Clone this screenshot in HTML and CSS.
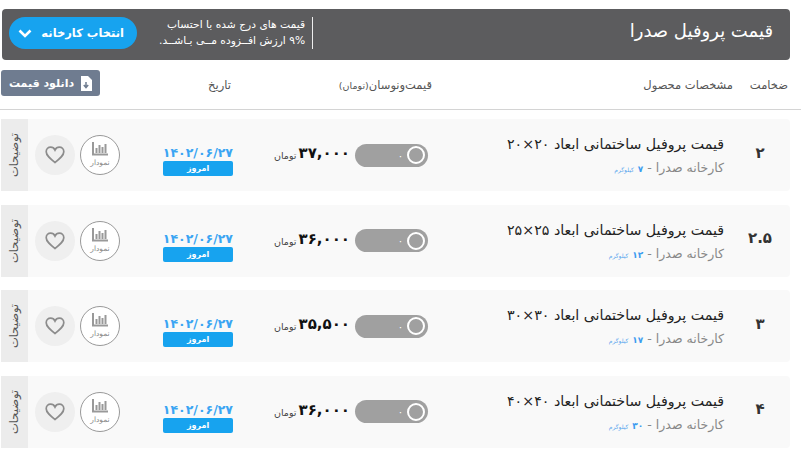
FILE: index.html
```html
<!DOCTYPE html>
<html lang="fa" dir="rtl">
<head><meta charset="utf-8"><title>قیمت پروفیل صدرا</title><link rel="stylesheet" href="styles.css"></head>
<body>
<div class="page">
<header class="banner">
  <h1 class="banner-title">قیمت پروفیل صدرا</h1>
  <div class="banner-side">
    <p class="banner-note">قیمت های درج شده با احتساب<br>۹% ارزش افــزوده مــی بـاشــد.</p>
    <button class="pick"><span>انتخاب کارخانه</span><svg width="14" height="9" viewBox="0 0 14 9"><path d="M1.5 1.5 7 7l5.5-5.5" fill="none" stroke="#fff" stroke-width="2.6"/></svg></button>
  </div>
</header>
<div class="thead">
  <span class="th-size">ضخامت</span>
  <span class="th-spec">مشخصات محصول</span>
  <span class="th-price">قیمت‌ونوسان<small>(تومان)</small></span>
  <span class="th-date">تاریخ</span>
  <button class="dl"><svg width="12" height="15" viewBox="0 0 12 15"><path d="M1 0h7l4 4v11H1z" fill="#fff"/><path d="M6 6v5M3.800 9 6 11.500 8.200 9" fill="none" stroke="#6f7c90" stroke-width="1.500"/></svg><span>دانلود قیمت</span></button>
</div>
<div class="row">
  <div class="size">۲</div>
  <div class="spec"><div class="name">قیمت پروفیل ساختمانی ابعاد ۲۰×۲۰</div><div class="maker">کارخانه صدرا - <b>۷</b> <small>کیلوگرم</small></div></div>
  <div class="toggle"><i></i><span>۰</span></div>
  <div class="price"><b>۳۷,۰۰۰</b><small>تومان</small></div>
  <div class="date"><span>۱۴۰۲/۰۶/۲۷</span><em>امروز</em></div>
  <div class="chart"><svg width="16" height="14" viewBox="0 0 16 14"><path d="M1 0v12.500h15M4.500 6v5M7.500 3v8M10.500 5v6M13.500 2v9" fill="none" stroke="#999" stroke-width="2"/></svg><small>نمودار</small></div>
  <div class="heart"><svg width="20" height="18" viewBox="0 0 20 18"><path d="M10 16.500C5 12.500 1.200 9.500 1.200 5.800 1.200 3 3.300 1.200 5.700 1.200c1.800 0 3.400 1 4.300 2.800.9-1.800 2.500-2.800 4.300-2.800 2.400 0 4.500 1.800 4.500 4.600 0 3.700-3.800 6.700-8.800 10.700z" fill="none" stroke="#8c8c8c" stroke-width="1.700"/></svg></div>
  <div class="notes"><span>توضیحات</span></div>
</div>
<div class="row">
  <div class="size">۲.۵</div>
  <div class="spec"><div class="name">قیمت پروفیل ساختمانی ابعاد ۲۵×۲۵</div><div class="maker">کارخانه صدرا - <b>۱۲</b> <small>کیلوگرم</small></div></div>
  <div class="toggle"><i></i><span>۰</span></div>
  <div class="price"><b>۳۶,۰۰۰</b><small>تومان</small></div>
  <div class="date"><span>۱۴۰۲/۰۶/۲۷</span><em>امروز</em></div>
  <div class="chart"><svg width="16" height="14" viewBox="0 0 16 14"><path d="M1 0v12.500h15M4.500 6v5M7.500 3v8M10.500 5v6M13.500 2v9" fill="none" stroke="#999" stroke-width="2"/></svg><small>نمودار</small></div>
  <div class="heart"><svg width="20" height="18" viewBox="0 0 20 18"><path d="M10 16.500C5 12.500 1.200 9.500 1.200 5.800 1.200 3 3.300 1.200 5.700 1.200c1.800 0 3.400 1 4.300 2.800.9-1.800 2.500-2.800 4.300-2.800 2.400 0 4.500 1.800 4.500 4.600 0 3.700-3.800 6.700-8.800 10.700z" fill="none" stroke="#8c8c8c" stroke-width="1.700"/></svg></div>
  <div class="notes"><span>توضیحات</span></div>
</div>
<div class="row">
  <div class="size">۳</div>
  <div class="spec"><div class="name">قیمت پروفیل ساختمانی ابعاد ۳۰×۳۰</div><div class="maker">کارخانه صدرا - <b>۱۷</b> <small>کیلوگرم</small></div></div>
  <div class="toggle"><i></i><span>۰</span></div>
  <div class="price"><b>۳۵,۵۰۰</b><small>تومان</small></div>
  <div class="date"><span>۱۴۰۲/۰۶/۲۷</span><em>امروز</em></div>
  <div class="chart"><svg width="16" height="14" viewBox="0 0 16 14"><path d="M1 0v12.500h15M4.500 6v5M7.500 3v8M10.500 5v6M13.500 2v9" fill="none" stroke="#999" stroke-width="2"/></svg><small>نمودار</small></div>
  <div class="heart"><svg width="20" height="18" viewBox="0 0 20 18"><path d="M10 16.500C5 12.500 1.200 9.500 1.200 5.800 1.200 3 3.300 1.200 5.700 1.200c1.800 0 3.400 1 4.300 2.800.9-1.800 2.500-2.800 4.300-2.800 2.400 0 4.500 1.800 4.500 4.600 0 3.700-3.800 6.700-8.800 10.700z" fill="none" stroke="#8c8c8c" stroke-width="1.700"/></svg></div>
  <div class="notes"><span>توضیحات</span></div>
</div>
<div class="row">
  <div class="size">۴</div>
  <div class="spec"><div class="name">قیمت پروفیل ساختمانی ابعاد ۴۰×۴۰</div><div class="maker">کارخانه صدرا - <b>۳۰</b> <small>کیلوگرم</small></div></div>
  <div class="toggle"><i></i><span>۰</span></div>
  <div class="price"><b>۳۶,۰۰۰</b><small>تومان</small></div>
  <div class="date"><span>۱۴۰۲/۰۶/۲۷</span><em>امروز</em></div>
  <div class="chart"><svg width="16" height="14" viewBox="0 0 16 14"><path d="M1 0v12.500h15M4.500 6v5M7.500 3v8M10.500 5v6M13.500 2v9" fill="none" stroke="#999" stroke-width="2"/></svg><small>نمودار</small></div>
  <div class="heart"><svg width="20" height="18" viewBox="0 0 20 18"><path d="M10 16.500C5 12.500 1.200 9.500 1.200 5.800 1.200 3 3.300 1.200 5.700 1.200c1.800 0 3.400 1 4.300 2.800.9-1.800 2.500-2.800 4.300-2.800 2.400 0 4.500 1.800 4.500 4.600 0 3.700-3.800 6.700-8.800 10.700z" fill="none" stroke="#8c8c8c" stroke-width="1.700"/></svg></div>
  <div class="notes"><span>توضیحات</span></div>
</div>
</div>
</body>
</html>
```
FILE: styles.css
```css
* { box-sizing: border-box; }
html, body { margin: 0; background: #fff; }
body { font-family: "DejaVu Sans", "Noto Sans", sans-serif; color: #333; overflow: hidden; width: 801px; height: 464px; }
.page { padding-top: 9px; }
.banner { margin: 0 11px 0 2px; height: 51px; background: #5c5c5e; border-radius: 4px; display: flex; justify-content: space-between; align-items: center; padding: 0 17px 0 7px; color: #fff; }
.banner-title { margin: 0 0 8px; font-size: 18px; font-weight: 400; }
.banner-side { display: flex; align-items: center; gap: 22px; margin-top: -3px; }
.banner-note { margin: 0; height: 32px; padding-right: 7px; border-right: 1px solid #eee; font-size: 10.700px; line-height: 16px; white-space: nowrap; }
.pick { width: 128px; height: 32px; border: 0; border-radius: 16px; background: #17a3ef; color: #fff; font: 700 11.500px "DejaVu Sans", sans-serif; display: flex; align-items: center; justify-content: space-between; padding: 0 13px 0 9px; }
.thead { height: 50px; border-bottom: 1px solid #d4d4d4; display: flex; align-items: center; padding: 0 13px 0 1px; font-size: 11.500px; color: #555; }
.th-size { width: 55px; white-space: nowrap; }
.th-spec { width: 301px; white-space: nowrap; }
.th-price { width: 201px; white-space: nowrap; }
.th-price small { font-size: 9.500px; }
.th-date { width: 90px; }
.dl { margin-right: auto; width: 99px; height: 26px; margin-top: -3px; border: 0; border-radius: 3px; background: #6f7c90; color: #fff; font: 700 11px "DejaVu Sans", sans-serif; display: flex; align-items: center; justify-content: center; gap: 6px; padding: 0; white-space: nowrap; }
.row { height: 72px; margin: 9px 11px 13.500px 1px; background: #f9f9f9; border-radius: 4px; display: flex; align-items: center; }
.size { width: 66px; padding-left: 6px; margin-bottom: 5px; text-align: center; font-size: 15px; font-weight: 700; color: #333; flex: none; }
.spec { width: 296px; padding-top: 3px; flex: none; }
.name { font-size: 14.200px; line-height: 18px; color: #222; white-space: nowrap; margin-bottom: 7px; }
.maker { font-size: 12.500px; line-height: 16px; color: #888; white-space: nowrap; }
.maker b { font-size: 9px; color: #3d9cf0; }
.maker small { font-size: 6px; color: #5aa6ee; }
.toggle { width: 73px; height: 23px; border-radius: 12px; background: #a0a0a0; display: flex; align-items: center; padding-right: 3px; color: #fff; font-size: 10px; gap: 4px; flex: none; }
.toggle i { width: 18px; height: 18px; border: 2px solid #fff; border-radius: 50%; }
.price { width: 117px; margin-right: 5px; margin-bottom: 4px; display: flex; align-items: center; gap: 2px; white-space: nowrap; flex: none; }
.price b { font-size: 15px; color: #111; }
.price small { font-size: 9.500px; color: #444; margin-top: 5px; }
.date { width: 70px; display: flex; flex-direction: column; align-items: stretch; gap: 1px; margin-top: 12px; flex: none; }
.date span { font-size: 12.500px; font-weight: 700; color: #3ba5f3; text-align: center; line-height: 14px; white-space: nowrap; }
.date em { font-style: normal; font-weight: 700; font-size: 8px; color: #fff; background: #17a3ef; border-radius: 2px; height: 15px; line-height: 15px; text-align: center; }
.chart { width: 40px; height: 40px; margin-right: 43px; border: 1px solid #999; border-radius: 50%; background: #fff; display: flex; flex-direction: column; align-items: center; justify-content: center; gap: 2px; color: #888; flex: none; }
.chart small { font-size: 7.500px; line-height: 10px; }
.heart { width: 40px; height: 40px; margin-right: 5px; border-radius: 50%; background: #efefef; display: flex; align-items: center; justify-content: center; flex: none; }
.notes { width: 27px; height: 72px; margin-right: 7px; background: #ececec; display: flex; align-items: center; justify-content: center; flex: none; }
.notes span { transform: rotate(-90deg); font-size: 11.500px; color: #555; white-space: nowrap; }
```
